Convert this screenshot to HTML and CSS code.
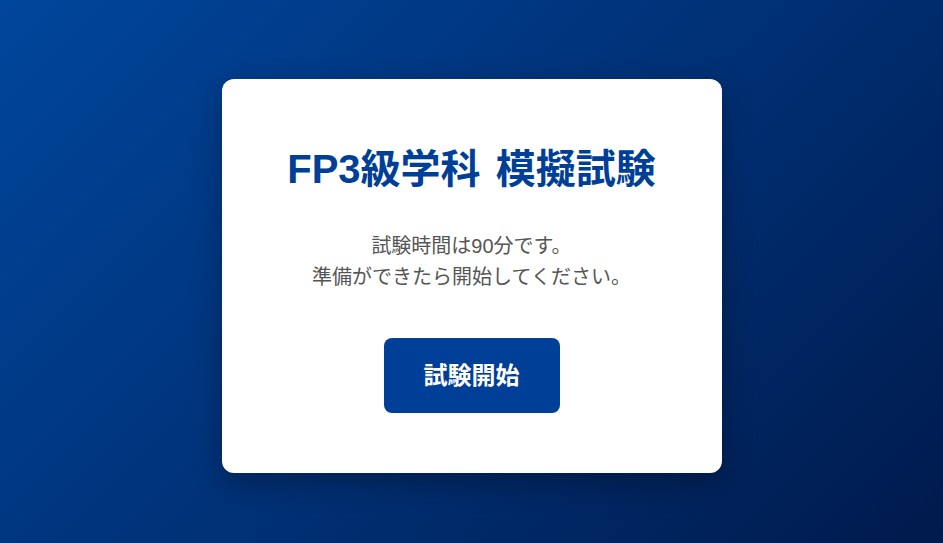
FILE: index.html
```html
<!DOCTYPE html>
<html lang="ja">
<head>
    <meta charset="UTF-8">
    <meta name="viewport" content="width=device-width, initial-scale=1.0">
    <title>FP3級学科 模擬試験</title>
    <link rel="stylesheet" href="styles.css">
</head>

<body>
    <div class="start-screen">
        <div class="start-card">
            <h1 class="start-title">FP3級学科 模擬試験</h1>
            <p class="start-text">試験時間は90分です。<br>準備ができたら開始してください。</p>
            <button class="start-button">試験開始</button>
        </div>
    </div>
</body>
</html>
```

FILE: styles.css
```css
body {
    margin: 0;
    font-family: "Liberation Sans", "Noto Sans CJK JP", sans-serif;
    background: linear-gradient(135deg, #00469c 0%, #002f73 55%, #001a4c 100%);
    min-height: 100vh;
}

.start-screen {
    min-height: 100vh;
    box-sizing: border-box;
    padding-top: 8px;
    display: flex;
    align-items: center;
    justify-content: center;
}

.start-card {
    width: 500px;
    box-sizing: border-box;
    padding: 60px 40px;
    background: #fff;
    border-radius: 12px;
    box-shadow: 0 10px 30px rgba(0, 0, 0, 0.3);
    text-align: center;
}

.start-title {
    margin: 0 0 32px;
    font-size: 40px;
    line-height: 60px;
    font-weight: 700;
    word-spacing: 4px;
    color: #003f98;
}

.start-text {
    margin: 0 0 45px;
    font-size: 20px;
    line-height: 31px;
    color: #555;
}

.start-button {
    padding: 20px 40px;
    font-family: inherit;
    font-size: 24px;
    line-height: 35px;
    font-weight: 700;
    color: #fff;
    background: #003f98;
    border: none;
    border-radius: 8px;
    cursor: pointer;
}

.start-button:hover {
    background: #00347f;
}
```
